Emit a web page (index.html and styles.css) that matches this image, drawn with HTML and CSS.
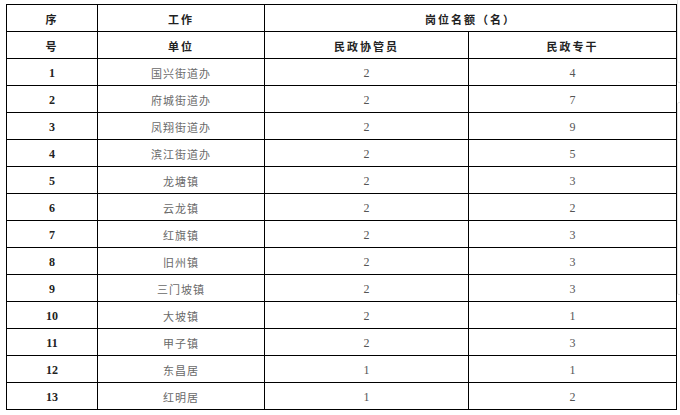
FILE: index.html
```html
<!DOCTYPE html>
<html lang="zh-CN">
<head>
<meta charset="utf-8">
<title>岗位名额</title>
<link rel="stylesheet" href="styles.css">
</head>
<body>
<table class="quota">
  <colgroup>
    <col class="c-no">
    <col class="c-unit">
    <col class="c-a">
    <col class="c-b">
  </colgroup>
  <thead>
    <tr>
      <th class="hd">序</th>
      <th class="hd">工作</th>
      <th class="hd" colspan="2">岗位名额（名）</th>
    </tr>
    <tr>
      <th class="hd">号</th>
      <th class="hd">单位</th>
      <th class="hd">民政协管员</th>
      <th class="hd">民政专干</th>
    </tr>
  </thead>
  <tbody>
    <tr><td class="no">1</td><td class="unit">国兴街道办</td><td class="num">2</td><td class="num">4</td></tr>
    <tr><td class="no">2</td><td class="unit">府城街道办</td><td class="num">2</td><td class="num">7</td></tr>
    <tr><td class="no">3</td><td class="unit">凤翔街道办</td><td class="num">2</td><td class="num">9</td></tr>
    <tr><td class="no">4</td><td class="unit">滨江街道办</td><td class="num">2</td><td class="num">5</td></tr>
    <tr><td class="no">5</td><td class="unit">龙塘镇</td><td class="num">2</td><td class="num">3</td></tr>
    <tr><td class="no">6</td><td class="unit">云龙镇</td><td class="num">2</td><td class="num">2</td></tr>
    <tr><td class="no">7</td><td class="unit">红旗镇</td><td class="num">2</td><td class="num">3</td></tr>
    <tr><td class="no">8</td><td class="unit">旧州镇</td><td class="num">2</td><td class="num">3</td></tr>
    <tr><td class="no">9</td><td class="unit">三门坡镇</td><td class="num">2</td><td class="num">3</td></tr>
    <tr><td class="no">10</td><td class="unit">大坡镇</td><td class="num">2</td><td class="num">1</td></tr>
    <tr><td class="no">11</td><td class="unit">甲子镇</td><td class="num">2</td><td class="num">3</td></tr>
    <tr><td class="no">12</td><td class="unit">东昌居</td><td class="num">1</td><td class="num">1</td></tr>
    <tr><td class="no">13</td><td class="unit">红明居</td><td class="num">1</td><td class="num">2</td></tr>
  </tbody>
</table>
<div class="edge edge-top"></div>
<div class="edge edge-mid"></div>
</body>
</html>
```

FILE: styles.css
```css
html, body {
  margin: 0;
  padding: 0;
  background: #ffffff;
}
body {
  position: relative;
  width: 680px;
  height: 415px;
  overflow: hidden;
}
.quota {
  margin: 4px 0 0 6px;
  border-collapse: collapse;
  table-layout: fixed;
  width: 670px;
}
.c-no { width: 91px; }
.c-unit { width: 167px; }
.c-a { width: 204px; }
.c-b { width: 208px; }
.quota th,
.quota td {
  border: 1px solid #000;
  height: 27px;
  padding: 2px 0 0 0;
  text-align: center;
  vertical-align: middle;
  line-height: 14px;
  box-sizing: border-box;
}
.hd {
  font-family: "Noto Sans CJK SC", "Liberation Serif", serif;
  font-weight: 700;
  font-size: 11px;
  letter-spacing: 2px;
  color: #222;
}
.no {
  font-family: "Liberation Serif", serif;
  font-weight: 700;
  font-size: 12px;
  color: #222;
}
.unit {
  font-family: "Noto Sans CJK SC", sans-serif;
  font-size: 11px;
  letter-spacing: 1px;
  color: #6a6a6a;
}
.num {
  font-family: "Liberation Serif", serif;
  font-size: 12px;
  color: #555;
}
.edge {
  position: absolute;
  left: 677px;
  width: 10px;
  border: 1px solid #e2e2e2;
  border-radius: 2px;
  background: #fff;
}
.edge-top {
  top: -4px;
  height: 85px;
}
.edge-mid {
  top: 102px;
  height: 191px;
}
```
